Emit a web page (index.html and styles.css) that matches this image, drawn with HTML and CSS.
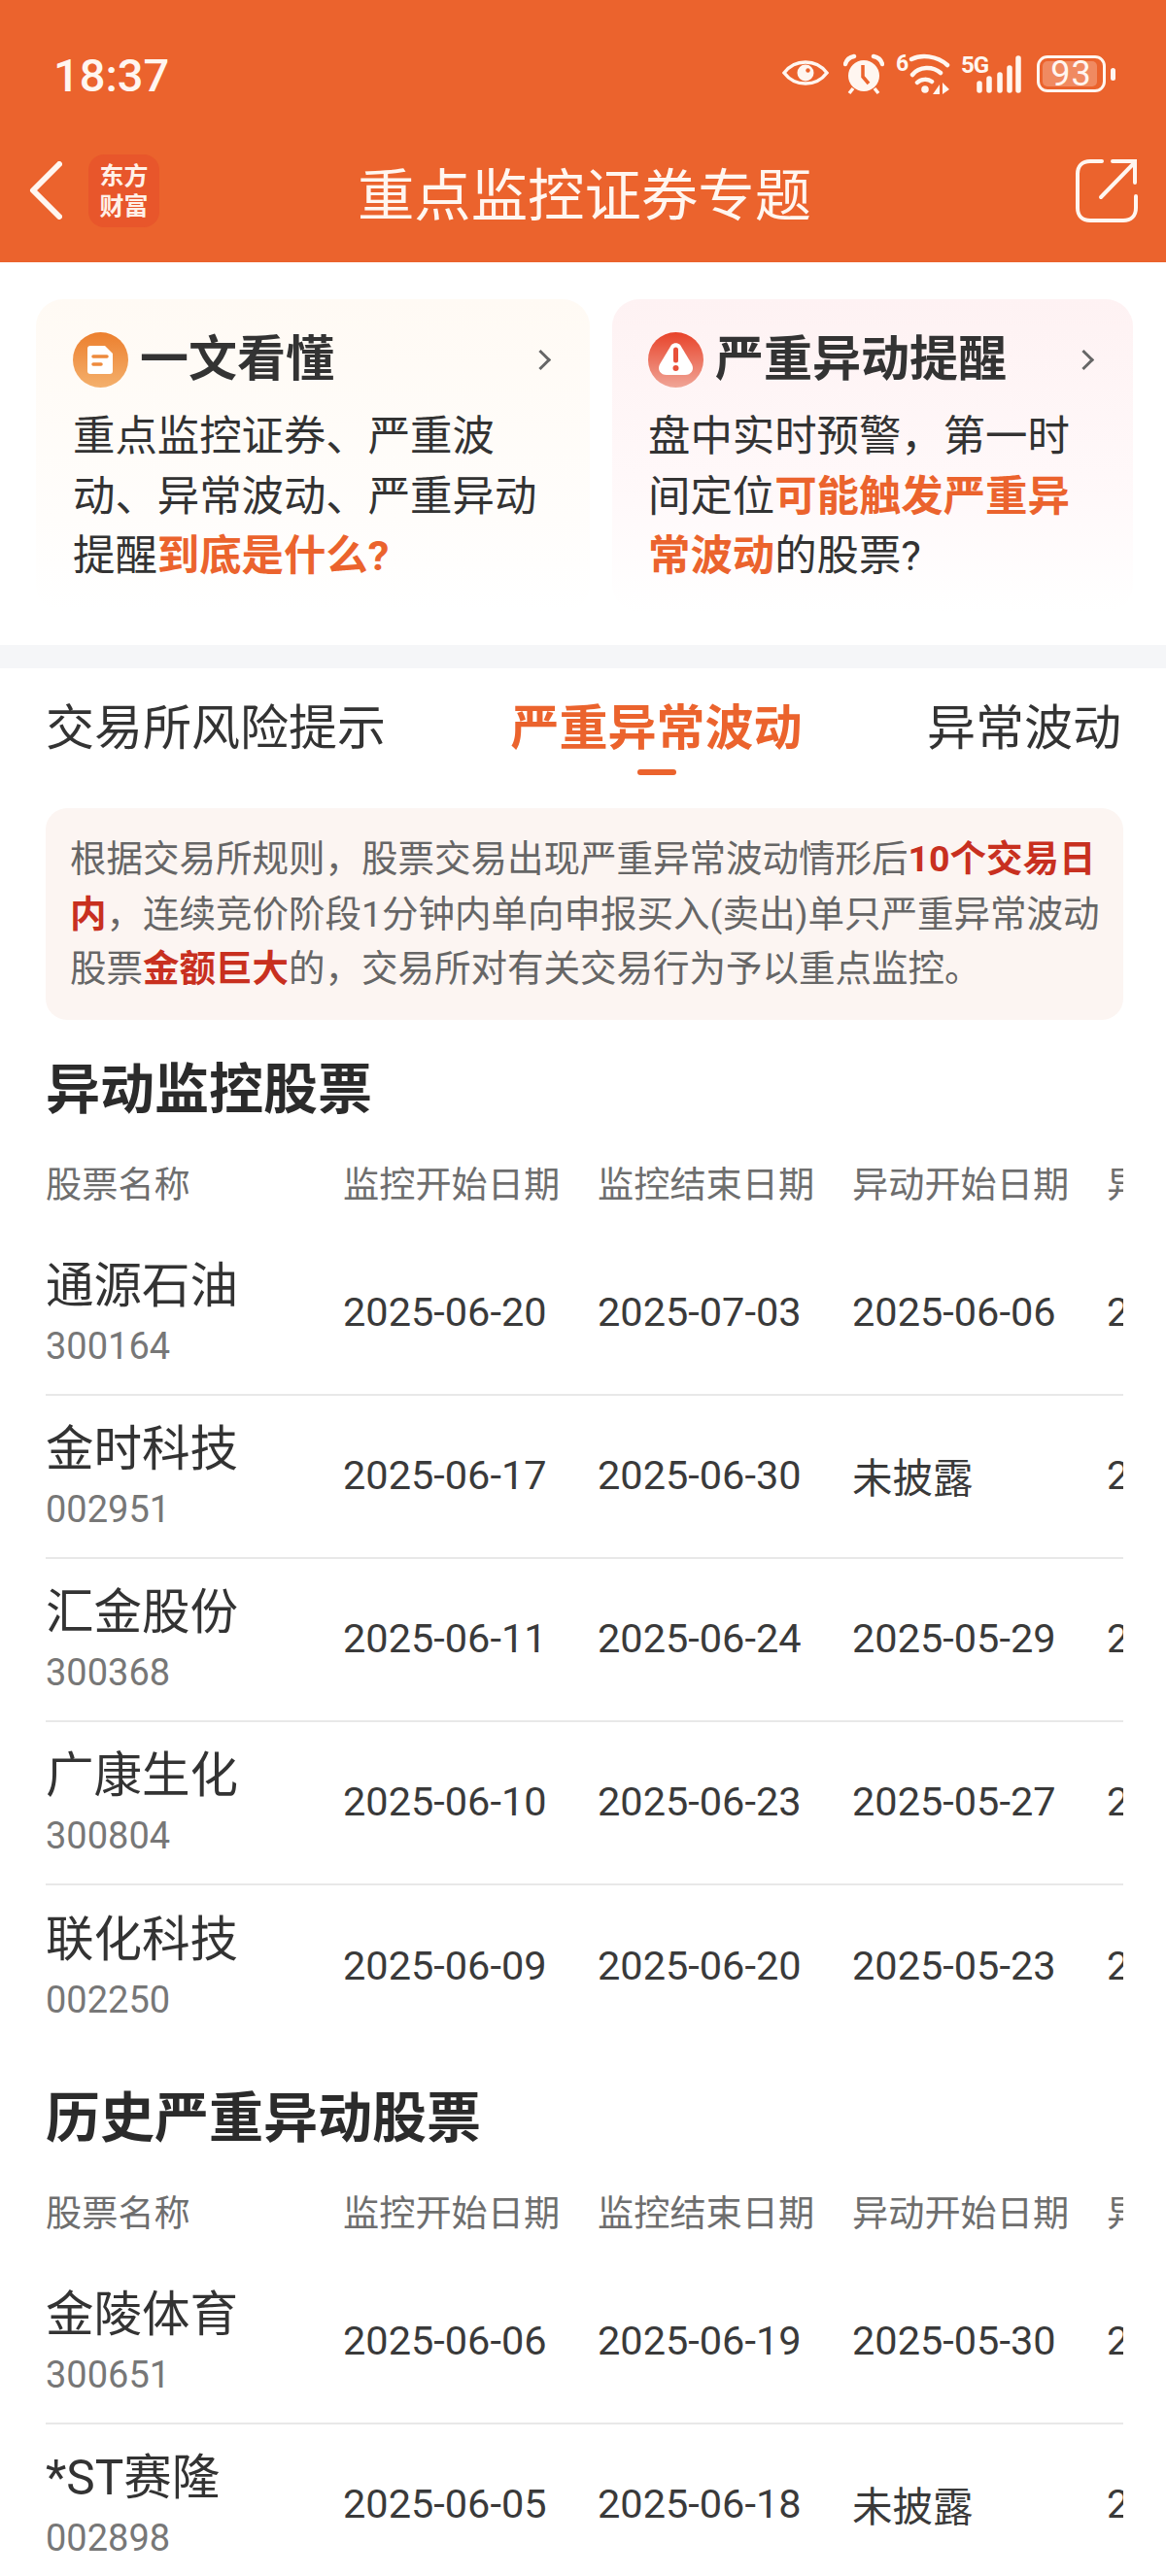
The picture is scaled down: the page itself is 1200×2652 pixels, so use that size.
FILE: index.html
```html
<!DOCTYPE html>
<html lang="zh-CN">
<head>
    <meta charset="UTF-8">
    <title>重点监控证券专题</title>
    <link rel="stylesheet" href="styles.css">
</head>
<body>
<div class="page">
    <header class="top">
        <div class="status">
            <span class="time">18:37</span>
            <div class="status-icons">
                <svg class="ic-eye" width="48" height="26" viewBox="0 0 48 26"><path d="M2 13C8 5 15 2 24 2S40 5 46 13C40 21 33 24 24 24S8 21 2 13Z" fill="none" stroke="#fff6f0" stroke-width="3.500"/><circle cx="24" cy="13" r="8.500" fill="#fff6f0"/><circle cx="26.500" cy="10.500" r="2.200" fill="#eb632d"/></svg>
                <svg class="ic-alarm" width="42" height="44" viewBox="0 0 42 44"><circle cx="21" cy="23" r="16" fill="#fff6f0"/><path d="M2 11C3 7 6 4 11 3M40 11C39 7 36 4 31 3" fill="none" stroke="#fff6f0" stroke-width="4.500" stroke-linecap="round"/><path d="M20 12V24L26 31" fill="none" stroke="#eb632d" stroke-width="3.500"/><path d="M10 36L6 41M32 36L36 41" stroke="#fff6f0" stroke-width="3.500"/></svg>
                <div class="wifi">
                    <span class="wifi-six">6</span>
                    <svg width="56" height="44" viewBox="0 0 56 44"><path d="M16 6C26 1 42 2 53 12M17 22C24 13 38 13 46 20M22 30C26 26 33 26 37 29" fill="none" stroke="#fff6f0" stroke-width="4.500" stroke-linecap="round"/><circle cx="30" cy="37" r="3.800" fill="#fff6f0"/><path d="M45 32V42H38ZM48 30L55 37L48 42Z" fill="#fff6f0"/></svg>
                </div>
                <div class="signal">
                    <span class="net">5G</span>
                    <svg width="62" height="44" viewBox="0 0 62 44"><path d="M19 31V38M29 26V38M40 22V38M50 15V38M59 5V38" stroke="#fff6f0" stroke-width="5.500" stroke-linecap="round"/></svg>
                </div>
                <div class="battery">
                    <div class="battery-body"><span class="battery-fill"></span><span class="battery-num">93</span></div>
                    <span class="battery-nub"></span>
                </div>
            </div>
        </div>
        <div class="nav">
            <svg class="back" width="34" height="60" viewBox="0 0 34 60"><path d="M31 3L4 30L31 57" fill="none" stroke="#fff6f0" stroke-width="6" stroke-linecap="round" stroke-linejoin="round"/></svg>
            <div class="logo">东方<br>财富</div>
            <h1 class="nav-title">重点监控证券专题</h1>
            <svg class="share" width="64" height="66" viewBox="0 0 64 66"><path d="M27 3H15C7 3 2 8 2 16V51C2 59 7 64 15 64H49C57 64 62 59 62 51V39" fill="none" stroke="#fff6f0" stroke-width="4" stroke-linecap="round"/><path d="M26 40L60 5M38 3H61V25" fill="none" stroke="#fff6f0" stroke-width="4" stroke-linecap="round"/></svg>
        </div>
    </header>

    <section class="cards">
        <div class="card card-learn">
            <div class="card-head">
                <svg class="badge" width="57" height="57" viewBox="0 0 57 57"><defs><linearGradient id="badgeOrange" x1="0" y1="0" x2="0" y2="1"><stop offset="0" stop-color="#ec7f2e"/><stop offset="1" stop-color="#f4b06c"/></linearGradient></defs><circle cx="28.500" cy="28.500" r="28.500" fill="url(#badgeOrange)"/><path d="M18 14H33L41 22V40C41 42 40 43 38 43H18C16 43 15 42 15 40V17C15 15 16 14 18 14Z" fill="#fff"/><path d="M21 25H35M21 33H29" stroke="#ee8a3c" stroke-width="3.500" stroke-linecap="round"/></svg>
                <h2 class="card-title">一文看懂</h2>
                <span class="chevron"></span>
            </div>
            <p class="card-text">重点监控证券、严重波动、异常波动、严重异动提醒<b>到底是什么?</b></p>
        </div>
        <div class="card card-alert">
            <div class="card-head">
                <svg class="badge" width="57" height="57" viewBox="0 0 57 57"><defs><linearGradient id="badgeRed" x1="0" y1="0" x2="0" y2="1"><stop offset="0" stop-color="#e8432a"/><stop offset="1" stop-color="#f0a597"/></linearGradient></defs><circle cx="28.500" cy="28.500" r="28.500" fill="url(#badgeRed)"/><path d="M24 13C26.500 10.500 30.500 10.500 33 13L45 33C48 39 44 44 38 44H19C13 44 9 39 12 33Z" fill="#fff"/><path d="M28.500 18V29" stroke="#e8503a" stroke-width="5" stroke-linecap="round"/><circle cx="28.500" cy="37" r="3" fill="#e8503a"/></svg>
                <h2 class="card-title">严重异动提醒</h2>
                <span class="chevron"></span>
            </div>
            <p class="card-text">盘中实时预警，第一时间定位<b>可能触发严重异常波动</b>的股票?</p>
        </div>
    </section>

    <div class="band"></div>

    <nav class="tabs">
        <span class="tab">交易所风险提示</span>
        <span class="tab tab-active">严重异常波动</span>
        <span class="tab">异常波动</span>
    </nav>

    <main class="content">
        <div class="notice">根据交易所规则，股票交易出现严重异常波动情形后<b>10个交易日内</b>，连续竞价阶段1分钟内单向申报买入(卖出)单只严重异常波动股票<b>金额巨大</b>的，交易所对有关交易行为予以重点监控。</div>

        <h2 class="section-title">异动监控股票</h2>
        <div class="table">
            <div class="row row-head"><span>股票名称</span><span>监控开始日期</span><span>监控结束日期</span><span>异动开始日期</span><span>异动结束日期</span></div>
            <div class="row">
                <div class="stock"><span class="stock-name">通源石油</span><span class="stock-code">300164</span></div>
                <span>2025-06-20</span><span>2025-07-03</span><span>2025-06-06</span><span>2025-06-19</span>
            </div>
            <div class="row">
                <div class="stock"><span class="stock-name">金时科技</span><span class="stock-code">002951</span></div>
                <span>2025-06-17</span><span>2025-06-30</span><span>未披露</span><span>2025-06-16</span>
            </div>
            <div class="row">
                <div class="stock"><span class="stock-name">汇金股份</span><span class="stock-code">300368</span></div>
                <span>2025-06-11</span><span>2025-06-24</span><span>2025-05-29</span><span>2025-06-10</span>
            </div>
            <div class="row">
                <div class="stock"><span class="stock-name">广康生化</span><span class="stock-code">300804</span></div>
                <span>2025-06-10</span><span>2025-06-23</span><span>2025-05-27</span><span>2025-06-09</span>
            </div>
            <div class="row row-last">
                <div class="stock"><span class="stock-name">联化科技</span><span class="stock-code">002250</span></div>
                <span>2025-06-09</span><span>2025-06-20</span><span>2025-05-23</span><span>2025-06-06</span>
            </div>
        </div>

        <h2 class="section-title">历史严重异动股票</h2>
        <div class="table">
            <div class="row row-head"><span>股票名称</span><span>监控开始日期</span><span>监控结束日期</span><span>异动开始日期</span><span>异动结束日期</span></div>
            <div class="row">
                <div class="stock"><span class="stock-name">金陵体育</span><span class="stock-code">300651</span></div>
                <span>2025-06-06</span><span>2025-06-19</span><span>2025-05-30</span><span>2025-06-05</span>
            </div>
            <div class="row">
                <div class="stock"><span class="stock-name">*ST赛隆</span><span class="stock-code">002898</span></div>
                <span>2025-06-05</span><span>2025-06-18</span><span>未披露</span><span>2025-06-04</span>
            </div>
        </div>
    </main>
</div>
</body>
</html>
```

FILE: styles.css
```css
* {
    box-sizing: border-box;
}

body {
    margin: 0;
    background: #fff;
    font-family: Roboto, "Noto Sans CJK SC", sans-serif;
    color: #333;
}

.page {
    width: 1200px;
    height: 2652px;
    overflow: hidden;
}

/* orange header */
.top {
    height: 270px;
    background: #eb632d;
    color: #fff6f0;
}

.status {
    height: 122px;
    padding: 32px 52px 0 55px;
    display: flex;
    align-items: center;
    justify-content: space-between;
}

.time {
    font-size: 47px;
    font-weight: 500;
}

.status-icons {
    display: flex;
    align-items: center;
    gap: 12px;
}

.ic-eye {
    margin: 0 3px 4px 0;
}

.wifi,
.signal {
    position: relative;
    height: 44px;
}

.wifi {
    width: 56px;
}

.wifi-six {
    position: absolute;
    left: 0;
    top: -2px;
    font-size: 23px;
    line-height: 26px;
    font-weight: 700;
}

.signal {
    width: 62px;
    margin-left: -1px;
}

.net {
    position: absolute;
    left: 0;
    top: 0;
    font-size: 24px;
    line-height: 24px;
    font-weight: 700;
    letter-spacing: -1px;
}

.battery {
    display: flex;
    align-items: center;
    gap: 5px;
    margin: 0 0 2px 4px;
}

.battery-body {
    position: relative;
    width: 71px;
    height: 38px;
    border: 3px solid #fff6f0;
    border-radius: 11px;
    text-align: center;
}

.battery-fill {
    position: absolute;
    left: 3px;
    top: 3px;
    bottom: 3px;
    width: 56px;
    background: rgba(255, 255, 255, .25);
    border-radius: 5px;
}

.battery-num {
    position: relative;
    display: block;
    font-size: 36px;
    line-height: 32px;
    letter-spacing: 1px;
}

.battery-nub {
    width: 5px;
    height: 13px;
    background: #fff6f0;
    border-radius: 3px;
}

.nav {
    height: 148px;
    padding: 0 29px 0 30px;
    display: flex;
    align-items: center;
}

.logo {
    margin-left: 27px;
    width: 73px;
    height: 75px;
    background: #e8562b;
    border-radius: 16px;
    color: #fff1e8;
    font-size: 25px;
    font-weight: 700;
    line-height: 31px;
    text-align: center;
    padding-top: 7px;
}

.nav-title {
    margin: 0;
    flex: 1;
    padding-right: 68px;
    font-size: 58.400px;
    font-weight: 400;
    text-align: center;
    white-space: nowrap;
}

/* two intro cards */
.cards {
    height: 394px;
    padding: 38px 34px 0 37px;
    display: grid;
    grid-template-columns: 570px 536px;
    gap: 23px;
}

.card {
    height: 322px;
    border-radius: 28px;
    padding: 34px 36px 0 38px;
}

.card-learn {
    background: linear-gradient(#fffaf4, #fffdfb 70%, #fff);
}

.card-alert {
    padding-left: 37px;
    background: linear-gradient(#fef2f3, #fff9fa 65%, #fff);
}

.card-head {
    display: flex;
    align-items: center;
    gap: 12px;
}

.card-title {
    margin: 0;
    flex: 1;
    font-size: 50px;
    line-height: 57px;
    font-weight: 700;
}

.chevron {
    width: 15px;
    height: 15px;
    border-top: 3px solid #666;
    border-right: 3px solid #666;
    transform: rotate(45deg);
    margin-right: 7px;
}

.card-text {
    margin: 20px 0 0;
    font-size: 43.400px;
    line-height: 61.500px;
    color: #333;
}

.card-text b {
    color: #eb632d;
    font-weight: 700;
}

.band {
    height: 24px;
    background: #f5f6f8;
}

/* tabs */
.tabs {
    height: 120px;
    padding: 0 46px 6px 47px;
    display: flex;
    align-items: center;
    justify-content: space-between;
}

.tab {
    position: relative;
    font-size: 50px;
    color: #333;
    white-space: nowrap;
}

.tab-active {
    color: #eb632d;
    font-weight: 700;
}

.tab-active::after {
    content: "";
    position: absolute;
    left: 50%;
    bottom: -17px;
    width: 40px;
    height: 6px;
    margin-left: -20px;
    background: #eb632d;
    border-radius: 3px;
}

.content {
    padding: 24px 44px 0 47px;
}

.notice {
    height: 218px;
    padding: 24px 18px 0 25px;
    background: #fcf5f2;
    border-radius: 22px;
    font-size: 37.500px;
    line-height: 56.500px;
    color: #666;
}

.notice b {
    color: #c8301f;
    font-weight: 700;
}

.section-title {
    margin: 32px 0 5px;
    font-size: 56px;
    line-height: 80px;
    font-weight: 700;
    color: #2b2b2b;
}

/* stock tables, the last column runs off the right edge */
.table {
    overflow: hidden;
}

.row {
    width: 1356px;
    height: 168px;
    padding-bottom: 3px;
    display: grid;
    grid-template-columns: 306px 262px 262px 262px 264px;
    align-items: center;
    border-bottom: 2px solid #e8e8e8;
    font-size: 41.500px;
    color: #3a3a3a;
    white-space: nowrap;
}

.row-head {
    height: 102px;
    padding-bottom: 2px;
    border-bottom: 0;
    font-size: 37.200px;
    color: #6e6e6e;
}

.row-last {
    border-bottom: 0;
}

.stock {
    margin-top: 3px;
    display: flex;
    flex-direction: column;
}

.stock-name {
    font-size: 49.500px;
    line-height: 60px;
    color: #333;
}

.stock-code {
    margin-top: 8px;
    font-size: 38px;
    line-height: 48px;
    color: #777;
}
```
